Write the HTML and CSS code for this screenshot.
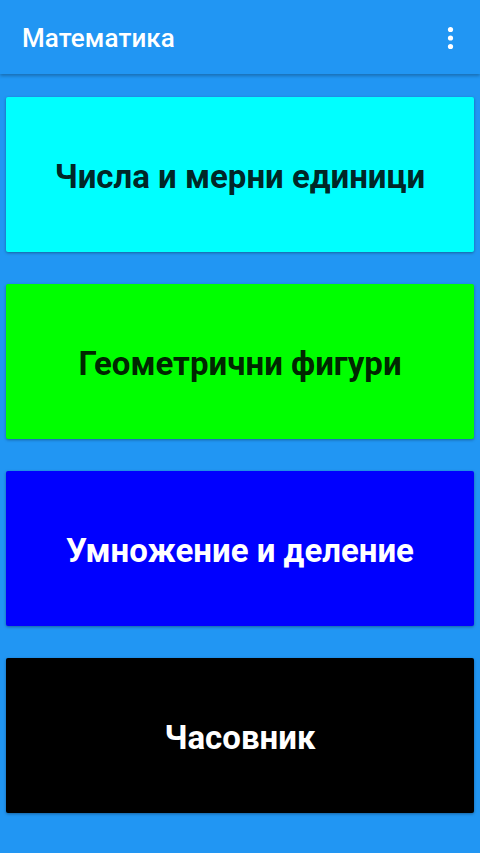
FILE: index.html
```html
<!DOCTYPE html>
<html lang="bg">
<head>
<meta charset="utf-8">
<title>Математика</title>
<link rel="stylesheet" href="styles.css">
</head>
<body>
<header class="appbar">
  <h1 class="title">Математика</h1>
  <button class="menu" aria-label="Меню">
    <svg width="7" height="24" viewBox="0 0 7 24"><circle cx="3.5" cy="3.5" r="2.6" fill="#fff"/><circle cx="3.5" cy="12" r="2.6" fill="#fff"/><circle cx="3.5" cy="20.5" r="2.6" fill="#fff"/></svg>
  </button>
</header>
<main class="list">
  <button class="card cyan">Числа и мерни единици</button>
  <button class="card green">Геометрични фигури</button>
  <button class="card blue">Умножение и деление</button>
  <button class="card black">Часовник</button>
</main>
</body>
</html>
```
FILE: styles.css
```css
* { box-sizing: border-box; }
html, body {
  margin: 0;
  padding: 0;
  height: 100%;
}
body {
  background: #2196F3;
  font-family: Roboto, "Noto Sans", sans-serif;
  overflow: hidden;
}
.appbar {
  height: 74px;
  background: #2196F3;
  display: flex;
  align-items: center;
  justify-content: space-between;
  padding: 2px 26px 0 22px;
  box-shadow: 0 2px 3px rgba(0,0,0,0.25);
  position: relative;
  z-index: 1;
}
.title {
  margin: 0;
  color: #fff;
  font-size: 26px;
  font-weight: 500;
  letter-spacing: 0.1px;
}
.menu {
  background: none;
  border: 0;
  padding: 0;
  display: flex;
}
.list {
  display: flex;
  flex-direction: column;
  gap: 32px;
  padding: 23px 6px 0 6px;
}
.card {
  height: 155px;
  border: 0;
  border-radius: 2px;
  font-family: Roboto, "Noto Sans", sans-serif;
  font-weight: 700;
  font-size: 33px;
  color: rgba(0,0,0,0.87);
  box-shadow: 0 1px 3px rgba(0,0,0,0.35);
  display: flex;
  align-items: center;
  justify-content: center;
  padding: 3px 0 0 0;
}
.cyan { background: #00FFFF; }
.green { background: #00FF00; }
.blue { background: #0000FF; color: #fff; }
.black { background: #000000; color: #fff; }
```
